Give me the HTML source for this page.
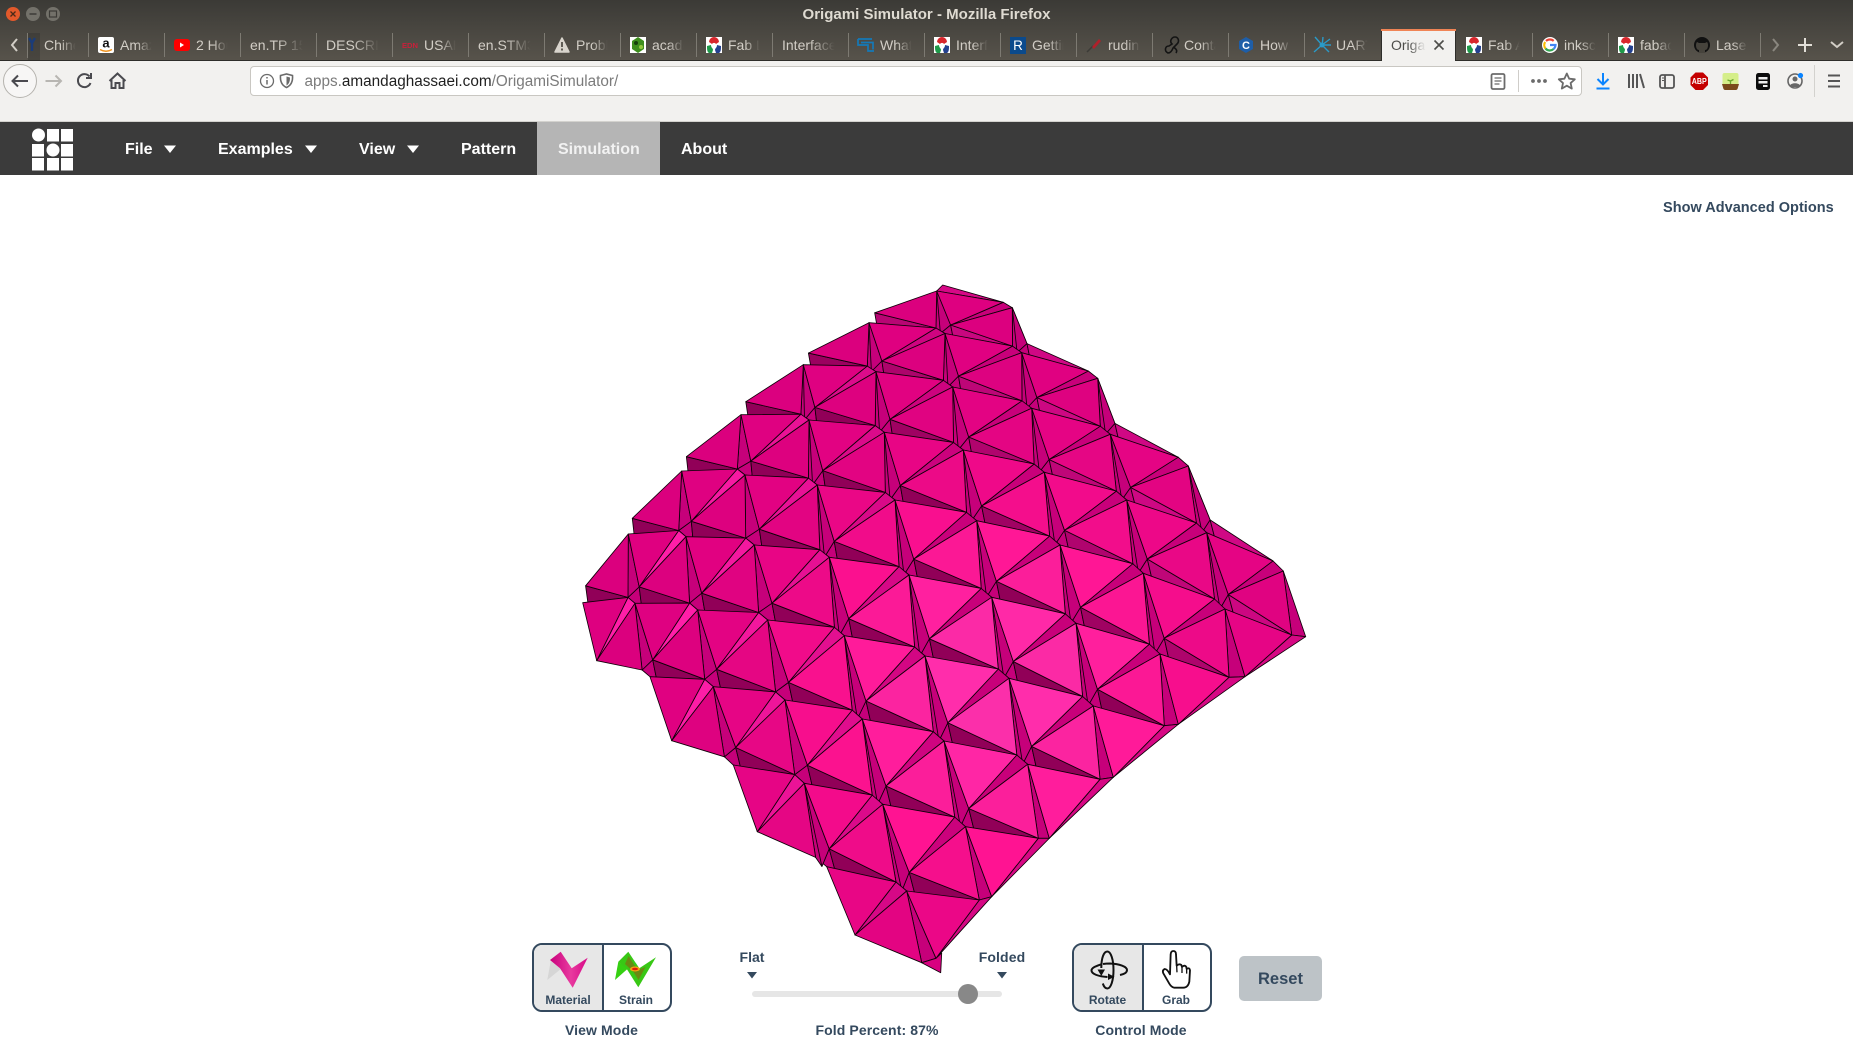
<!DOCTYPE html>
<html><head><meta charset="utf-8"><title>Origami Simulator - Mozilla Firefox</title>
<style>
html,body{margin:0;padding:0;width:1853px;height:1053px;overflow:hidden;background:#fff;font-family:"Liberation Sans",sans-serif}
.a{position:absolute}
svg.a{left:0;top:0}
#top{left:0;top:0;width:1853px;height:60px;background:linear-gradient(#3b3a36,#57534b)}
#line{left:0;top:60px;width:1853px;height:1px;background:#2e2d2a}
#tb{left:0;top:61px;width:1853px;height:60px;background:#f2f1ef}
#tbl{left:0;top:121px;width:1853px;height:1px;background:#d3d2ce}
#nav{left:0;top:122px;width:1853px;height:53px;background:#3b3b3b}
#sim{left:537px;top:122px;width:123px;height:53px;background:#b5b5b5;border-bottom:0}
#url{left:250px;top:66px;width:1330px;height:28px;background:#fff;border:1px solid #c9c7c2;border-radius:4px}
.t{position:absolute;top:33px;height:24px;overflow:hidden;white-space:nowrap;font-size:14px;line-height:24px;color:#d2cec6;-webkit-mask-image:linear-gradient(90deg,#000 50%,transparent 96%);mask-image:linear-gradient(90deg,#000 50%,transparent 96%)}
.n{position:absolute;top:140px;font-size:16px;line-height:20px;font-weight:bold;color:#fff;white-space:nowrap}
.l{position:absolute;font-weight:bold;color:#34495e;white-space:nowrap;transform:translateX(-50%)}
.g{position:absolute;top:943px;height:65px;width:136px;border:2px solid #34495e;border-radius:10px;overflow:hidden;background:#fff}
.g i{position:absolute;left:0;top:0;width:68px;height:65px;background:#e7e7e7;border-right:2px solid #34495e}
</style></head><body>
<div class="a" id="top"></div><div class="a" id="line"></div><div class="a" id="tb"></div><div class="a" id="tbl"></div><div class="a" id="nav"></div><div class="a" id="sim"></div><div class="a" id="url"></div>

<div class="a" style="left:1381px;top:29px;width:75px;height:32px;background:#f2f1ef;border-left:1px solid #2e2d2a;border-right:1px solid #2e2d2a;box-sizing:border-box"></div>
<div class="a" style="left:1381px;top:29px;width:75px;height:2px;background:#f08455"></div>

<div class="t" style="left:44px;width:33px">Chinese</div>
<div class="t" style="left:120px;width:33px">Amazon</div>
<div class="t" style="left:196px;width:33px">2 Hours</div>
<div class="t" style="left:250px;width:55px">en.TP 1500</div>
<div class="t" style="left:326px;width:55px">DESCRIPTION</div>
<div class="t" style="left:424px;width:33px">USAF</div>
<div class="t" style="left:478px;width:55px">en.STM32</div>
<div class="t" style="left:576px;width:33px">Problem</div>
<div class="t" style="left:652px;width:33px">academy</div>
<div class="t" style="left:728px;width:33px">Fab Lab</div>
<div class="t" style="left:782px;width:55px">Interface</div>
<div class="t" style="left:880px;width:33px">What</div>
<div class="t" style="left:956px;width:33px">Interface</div>
<div class="t" style="left:1032px;width:33px">Getting</div>
<div class="t" style="left:1108px;width:33px">rudin</div>
<div class="t" style="left:1184px;width:33px">Contact</div>
<div class="t" style="left:1260px;width:33px">How</div>
<div class="t" style="left:1336px;width:33px">UART</div>
<div class="t" style="left:1391px;width:36px;color:#4d4d4a">Origami</div>
<div class="t" style="left:1488px;width:33px">Fab Academy</div>
<div class="t" style="left:1564px;width:33px">inkscape</div>
<div class="t" style="left:1640px;width:33px">fabacademy</div>
<div class="t" style="left:1716px;width:33px">Laser</div>

<div class="a" style="left:304.5px;top:70px;font-size:15.3px;line-height:24px;color:#7b7b7b;white-space:nowrap">apps.<span style="color:#1f1f1f">amandaghassaei.com</span>/OrigamiSimulator/</div>

<div class="n" style="left:125px">File</div>
<div class="n" style="left:218px">Examples</div>
<div class="n" style="left:359px">View</div>
<div class="n" style="left:461px">Pattern</div>
<div class="n" style="left:558px;color:#f2f2f2">Simulation</div>
<div class="n" style="left:681px">About</div>

<svg class="a" width="1853" height="1053" viewBox="0 0 1853 1053">
<defs>
<symbol id="fab" viewBox="0 0 16 16"><rect width="16" height="16" fill="#fff"/><path d="M3 5a5 5 0 0 1 10 0l-3 2a2.400 2.400 0 0 0-4 0z" fill="#d8262c"/><path d="M1 9l4 -1c0 3 2 3 2 5l-1 3H3C1 15 1 12 1 9z" fill="#1f9a4a"/><path d="M15 9l-4-1c0 3-2 3-2 5l1 3h3c2-1 2-4 2-7z" fill="#24418f"/></symbol>
</defs>
<!-- window buttons -->
<circle cx="13" cy="14" r="7" fill="#e2592b"/><path d="M10.500 11.500l5 5m0-5l-5 5" stroke="#4a2a18" stroke-width="1.300"/>
<circle cx="33" cy="14" r="7" fill="#73716a"/><path d="M29.500 14h7" stroke="#3c3b37" stroke-width="1.500"/>
<circle cx="53" cy="14" r="7" fill="#73716a"/><rect x="49.500" y="11" width="7" height="6" fill="none" stroke="#3c3b37" stroke-width="1.200"/>
<text x="926.500" y="19" text-anchor="middle" font-family="Liberation Sans" font-weight="bold" font-size="14.500" textLength="248" lengthAdjust="spacingAndGlyphs" fill="#dfdbd2">Origami Simulator - Mozilla Firefox</text>
<!-- tab strip -->
<path d="M17 39l-5 6 5 6" fill="none" stroke="#d2cec6" stroke-width="2"/>
<rect x="27" y="33" width="1" height="25" fill="#7d7a72"/>
<rect x="28" y="33" width="12" height="27" fill="#2e2d2a" opacity=".35"/>
<path d="M29 38l3 5v8m3-13l-3 5" fill="none" stroke="#1b3c78" stroke-width="2.400"/>
<g fill="#7d7a72">
<rect x="88" y="33" width="1" height="24"/><rect x="164" y="33" width="1" height="24"/><rect x="240" y="33" width="1" height="24"/><rect x="316" y="33" width="1" height="24"/><rect x="392" y="33" width="1" height="24"/><rect x="468" y="33" width="1" height="24"/><rect x="544" y="33" width="1" height="24"/><rect x="620" y="33" width="1" height="24"/><rect x="696" y="33" width="1" height="24"/><rect x="772" y="33" width="1" height="24"/><rect x="848" y="33" width="1" height="24"/><rect x="924" y="33" width="1" height="24"/><rect x="1000" y="33" width="1" height="24"/><rect x="1076" y="33" width="1" height="24"/><rect x="1152" y="33" width="1" height="24"/><rect x="1228" y="33" width="1" height="24"/><rect x="1304" y="33" width="1" height="24"/><rect x="1532" y="33" width="1" height="24"/><rect x="1608" y="33" width="1" height="24"/><rect x="1684" y="33" width="1" height="24"/><rect x="1760" y="33" width="1" height="24"/>
</g>
<!-- amazon -->
<rect x="98" y="37" width="16" height="16" rx="2" fill="#fff"/><text x="106" y="47.500" text-anchor="middle" font-family="Liberation Sans" font-weight="bold" font-size="13" fill="#111">a</text><path d="M100 49.500q6 3.500 12 0" fill="none" stroke="#f0931e" stroke-width="1.500"/>
<!-- youtube -->
<rect x="174" y="39" width="16" height="12" rx="3" fill="#f00"/><path d="M180 42.500v5l4-2.500z" fill="#fff"/>
<!-- EDN -->
<text x="402" y="48" font-family="Liberation Sans" font-weight="bold" font-size="7.500" textLength="16" lengthAdjust="spacingAndGlyphs" fill="#c8203a">EDN</text>
<!-- warning -->
<path d="M562 38l7 14h-14z" fill="#d9d5cd" stroke="#d9d5cd" stroke-width="1.500" stroke-linejoin="round"/><path d="M562 42v5m0 1.500v2" stroke="#4b4841" stroke-width="1.700"/>
<!-- acad -->
<rect x="630" y="37" width="16" height="16" fill="#fff"/><path d="M638 37l6 4v8l-6 4-6-4v-8z" fill="#3e8e1e"/><circle cx="636" cy="43" r="2" fill="#163f0c"/><circle cx="641" cy="47" r="2" fill="#92c83e"/>
<use href="#fab" x="706" y="37" width="16" height="16"/>
<!-- what -->
<path d="M858 39h14M858 39v6h10v6h6M861 42.500h12v7" fill="none" stroke="#1479b8" stroke-width="1.700"/>
<use href="#fab" x="934" y="37" width="16" height="16"/>
<!-- R -->
<rect x="1010" y="37" width="16" height="17" fill="#0b4a8c"/><text x="1018" y="50" text-anchor="middle" font-family="Liberation Sans" font-size="13.500" fill="#fff">R</text>
<!-- rudin -->
<path d="M1087 52l6-6" stroke="#3c3b37" stroke-width="1.500"/><path d="M1092 47l7-8 2 2-7 8z" fill="#b0202a"/>
<!-- cont -->
<path d="M1168 53c-4-2-3-7 1-7l3-2c-3-3 0-7 3-7s5 4 2 7l-4 4c-1 3-3 5-5 5z M1173 47c2 1 5 3 3 6" fill="none" stroke="#141414" stroke-width="1.600"/>
<!-- how -->
<path d="M1246 37l7 4v8l-7 4-7-4v-8z" fill="#1e5ea8"/><text x="1246" y="49" text-anchor="middle" font-family="Liberation Sans" font-weight="bold" font-size="11" fill="#fff">C</text>
<!-- uart -->
<g stroke="#2a9ac8" stroke-width="1.400"><path d="M1322 45l-7-8m7 8l8-6m-8 8l1-10m-1 8l-8 7m8-7l7 7m-7-7l9 0"/></g><circle cx="1322" cy="45" r="2.500" fill="#2a9ac8"/>
<!-- active close -->
<path d="M1434.500 40.500l9 9m0-9l-9 9" stroke="#4d4d4a" stroke-width="1.600"/>
<use href="#fab" x="1466" y="37" width="16" height="16"/>
<!-- google -->
<circle cx="1550" cy="45" r="8" fill="#fff"/>
<path d="M1550 39.500a5.500 5.500 0 0 1 3.700 1.400" fill="none" stroke="#ea4335" stroke-width="2.200"/><path d="M1546 41a5.500 5.500 0 0 1 4-1.500" fill="none" stroke="#ea4335" stroke-width="2.200"/><path d="M1545.500 48.500a5.500 5.500 0 0 1-.3-6.500" fill="none" stroke="#fbbc05" stroke-width="2.200"/><path d="M1553.500 49a5.500 5.500 0 0 1-8-.5" fill="none" stroke="#34a853" stroke-width="2.200"/><path d="M1550 45h5.500a5.500 5.500 0 0 1-2 4" fill="none" stroke="#4285f4" stroke-width="2.200"/>
<use href="#fab" x="1618" y="37" width="16" height="16"/>
<!-- github -->
<circle cx="1702" cy="45" r="8" fill="#111"/><path d="M1699 53v-3c-2 0-3-2-3-5 0-2 1-3 1-3l2 1h6l2-1s1 1 1 3c0 3-1 5-3 5v3z" fill="#46433c"/>
<path d="M1773 39l5 6-5 6" fill="none" stroke="#8a877f" stroke-width="2"/>
<path d="M1805 38v14M1798 45h14" stroke="#e2dfd8" stroke-width="2"/>
<path d="M1831 42l6 5 6-5" fill="none" stroke="#d2cec6" stroke-width="2"/>
<!-- toolbar -->
<circle cx="20" cy="81" r="16.500" fill="#f7f6f5" stroke="#b5b3ae"/>
<path d="M28 81H12.500M18 75.500L12.500 81l5.500 5.500" fill="none" stroke="#4a4a4f" stroke-width="2"/>
<path d="M61 81H45.500M55.500 75.500L61 81l-5.500 5.500" fill="none" stroke="#b8b6b2" stroke-width="2"/>
<path d="M90.500 83a6.500 6.500 0 1 1-1-6.500M91 73v5h-5" fill="none" stroke="#4a4a4f" stroke-width="2"/>
<path d="M109.500 81l8-7.500 8 7.500M111.500 80v8h4v-5h4v5h4v-8" fill="none" stroke="#4a4a4f" stroke-width="2"/>
<circle cx="267" cy="81" r="6.500" fill="none" stroke="#6b6b6b" stroke-width="1.300"/><path d="M267 80v4.500M267 77v1.500" stroke="#6b6b6b" stroke-width="1.500"/>
<path d="M280.500 75.500l6-1.500 6 1.500c.5 6-1.500 10-6 12-4.500-2-6.500-6-6-12z" fill="none" stroke="#6b6b6b" stroke-width="1.600"/><path d="M286.500 76.500l3.500 1c0 4-1 6.500-3.500 8z" fill="#6b6b6b"/>
<rect x="1491.500" y="74" width="13" height="15" rx="1.500" fill="none" stroke="#6b6b6b" stroke-width="1.800"/><path d="M1494.500 78h7m-7 3h7m-7 3h5" stroke="#6b6b6b" stroke-width="1.200"/>
<rect x="1518" y="70" width="1" height="22" fill="#cfcdc9"/>
<g fill="#6b6b6b"><circle cx="1533" cy="81" r="1.900"/><circle cx="1539" cy="81" r="1.900"/><circle cx="1545" cy="81" r="1.900"/></g>
<path d="M1566.800 73.500l2.400 5.200 5.600.6-4.200 3.800 1.200 5.500-5-2.900-5 2.900 1.200-5.500-4.200-3.800 5.600-.6z" fill="none" stroke="#6b6b6b" stroke-width="1.800" stroke-linejoin="round"/>
<path d="M1603 73v11M1597.500 79l5.500 5.500 5.500-5.500M1596.500 88.500h13" fill="none" stroke="#0a84ff" stroke-width="2"/>
<path d="M1629 74v14M1633 74v14M1637 74v14M1640 74l4 14" fill="none" stroke="#555" stroke-width="2"/>
<rect x="1660" y="75" width="14" height="13" rx="2" fill="none" stroke="#555" stroke-width="1.800"/><path d="M1665 75v13" stroke="#555" stroke-width="1.800"/><path d="M1662 78h2m-2 2.500h2" stroke="#555"/>
<path d="M1695.500 72.500h7.500l5 5v7.500l-5 5h-7.500l-5-5v-7.500z" fill="#c40000"/><text x="1699.300" y="84" text-anchor="middle" font-family="Liberation Sans" font-weight="bold" font-size="8" textLength="15" lengthAdjust="spacingAndGlyphs" fill="#fff">ABP</text>
<path d="M1722.500 75a2 2 0 0 1 2-2h12a2 2 0 0 1 2 2v9h-16z" fill="#d5ee8a"/><path d="M1722 84h17l-1.500 5a2 2 0 0 1-2 1h-10a2 2 0 0 1-2-1z" fill="#7a4a1c"/><path d="M1730.500 84v-3m0 0l-3-1m3 1l3-1.500" stroke="#6aa52c" stroke-width="1.300" fill="none"/>
<rect x="1756" y="73" width="14" height="17" rx="2.500" fill="#0c0c0c"/><rect x="1758.500" y="77" width="9" height="2.500" fill="#eee"/><rect x="1758.500" y="81" width="9" height="2.500" fill="#eee"/><rect x="1763" y="85" width="4.500" height="2" fill="#eee"/>
<circle cx="1795" cy="81" r="7" fill="none" stroke="#666" stroke-width="1.600"/><circle cx="1795" cy="79" r="2.500" fill="#666"/><path d="M1790 85.500c1-3 9-3 10 0v1.500h-10z" fill="#666"/><circle cx="1800.500" cy="75.500" r="2.600" fill="#0a84ff"/>
<rect x="1814" y="65" width="1" height="32" fill="#d3d2ce"/>
<path d="M1828 75.500h12M1828 81h12M1828 86.500h12" stroke="#555" stroke-width="2"/>
<!-- logo -->
<g fill="#fff">
<circle cx="38.500" cy="135" r="6.500"/><rect x="47" y="129" width="12" height="12.500"/><rect x="61" y="129" width="12" height="12.500"/>
<rect x="32" y="144" width="12" height="12.500"/><circle cx="53" cy="150" r="6.500"/><rect x="61" y="144" width="12" height="12.500"/>
<rect x="32" y="158" width="12" height="12.500"/><rect x="47" y="158" width="12" height="12.500"/><rect x="61" y="158" width="12" height="12.500"/>
<path d="M164 145.500h12l-6 7.500zM305 145.500h12l-6 7.500zM407 145.500h12l-6 7.500z"/>
</g>
<!-- origami goes here -->
<g id="o" stroke="#0e0008" stroke-width=".85" stroke-linejoin="round"></g>
</svg>

<div class="a" style="left:1663px;top:198px;font-size:14.500px;line-height:20px;font-weight:bold;color:#34495e;white-space:nowrap;letter-spacing:.02px">Show Advanced Options</div>

<div class="g" style="left:532px"><i></i></div>
<div class="g" style="left:1072px"><i></i></div>
<div class="l" style="left:568px;top:993px;font-size:12px;line-height:15px">Material</div>
<div class="l" style="left:636px;top:993px;font-size:12px;line-height:15px">Strain</div>
<div class="l" style="left:601.500px;top:1022px;font-size:14px;line-height:16px;letter-spacing:.1px">View Mode</div>
<div class="l" style="left:752px;top:949px;font-size:14px;line-height:16px">Flat</div>
<div class="l" style="left:1002px;top:949px;font-size:14px;line-height:16px;letter-spacing:.1px">Folded</div>
<div class="l" style="left:877px;top:1022px;font-size:14px;line-height:16px;letter-spacing:.1px">Fold Percent: 87%</div>
<div class="a" style="left:752px;top:991px;width:250px;height:6px;border-radius:3px;background:#e6e6e6"></div>
<div class="a" style="left:958px;top:984px;width:20px;height:20px;border-radius:50%;background:#888"></div>
<div class="l" style="left:1107.500px;top:993px;font-size:12px;line-height:15px">Rotate</div>
<div class="l" style="left:1176px;top:993px;font-size:12px;line-height:15px">Grab</div>
<div class="l" style="left:1141px;top:1022px;font-size:14px;line-height:16px;letter-spacing:.1px">Control Mode</div>
<div class="a" style="left:1239px;top:956px;width:83px;height:45px;border-radius:5px;background:#bdc3c7;color:#34495e;font-size:16.500px;font-weight:bold;line-height:47px;text-align:center">Reset</div>

<svg class="a" width="1853" height="1053" viewBox="0 0 1853 1053" style="pointer-events:none">
<defs><linearGradient id="mg" x1="0" x2="1" y1="0" y2="0"><stop offset="0" stop-color="#c8007c"/><stop offset=".55" stop-color="#e83a9f"/><stop offset="1" stop-color="#d80a88"/></linearGradient></defs>
<!-- carets -->
<path d="M747 972h10l-5 6.500zM997 972h10l-5 6.500z" fill="#34495e"/>
<!-- material -->
<path d="M550.700 961l-3.400 19 14.700-12z" fill="#d6d6d6"/>
<path d="M550 960l10.700-8.300 11 16.600 16-10.600-15 30-12.700-19.400z" fill="url(#mg)"/>
<!-- strain -->
<path d="M618.300 961.700l-3.300 18.300 13-11.500z" fill="#35d012"/>
<path d="M618.300 961.700l10-10 11 16.600 16.700-11-17.700 30-12-19z" fill="#38c815"/>
<path d="M625 964l3.500-8 9 14 8-3-7 13-5-8z" fill="#6a8a12"/>
<ellipse cx="635" cy="969" rx="5" ry="2.500" fill="#f2a010"/><ellipse cx="635" cy="969" rx="3" ry="1.300" fill="#e31a0a"/>
<!-- rotate -->
<g fill="none" stroke="#111" stroke-width="2">
<path d="M1102 964c-5.500 2-10.500 3.500-10.500 6.500 0 3.500 7 6 16 6.500M1103 964c3-.5 5-.5 7-.5 9 .3 17 3 17 6.500 0 2-2 4-7 5"/>
<path d="M1101.300 968c0-10 2.500-16.500 6-16.500s6.200 8 6.200 18.500-2.700 18.500-6.200 18.500c-2 0-3.500-2-4.500-5"/>
</g>
<path d="M1097.500 969.500h7.500l-3.700 6.500zM1108 973.500l6.500 3.300-6.500 3.200z" fill="#111"/>
<!-- grab -->
<g transform="translate(1070 945) scale(.3333)">
<path d="M302 28Q303 18 310 18Q318 18 318 28L320 62Q328 55 334 60L336 66Q344 58 349 66L350 72Q358 66 360 76L358 110Q354 128 340 128L312 128Q304 126 298 116L280 85Q276 76 284 72Q292 72 300 88Z" fill="#fff" stroke="#111" stroke-width="5.500" stroke-linejoin="round"/>
<path d="M320 62L321 82M336 66L336 84M350 72L350 86" fill="none" stroke="#111" stroke-width="4"/>
</g>
</svg>

<script>
var rows={
0:[0,[936.7,291,1012.3,307.7]],
1:[0,[869,322.7,945,333.5,1021.7,352.7,1097.7,378.3]],
2:[0,[803.3,364.7,876,371.7,952.7,387,1031.7,408.3,1110.3,434.3,1188.3,466]],
3:[0,[741,414.7,809,420,884.3,432.3,963.3,450,1044.3,472.3,1126.7,500,1206.7,532.7,1283.3,571]],
4:[0,[681.7,471,745,475,817.3,485,895,500,976.7,520.7,1060,545,1143.3,573.3,1225,609]],
5:[0,[628.3,534,686,536.7,754.3,545,829.3,557.3,909,575,991.7,597.3,1076,623.3,1160,654]],
6:[0,[582.7,602.7,635,603.3,697.7,610,767.7,620,844.3,635.7,925,656,1009,678.3,1093.3,706]],
7:[2,[650,676.7,713.3,686.7,785,700,862.3,719,944,741,1027.7,764.3]],
8:[4,[733.3,765,804.3,783.3,882.7,804.3,965.5,826.7]],
9:[6,[826.7,866.7,906.7,891]],
10:[8,[930,970,1005,990]],
11:[9,[950,1040,1025,1060]]
};
var Qo={'4,8':[1291.7,635],'5,8':[1229,677.3],'6,8':[1164.3,725.7],'7,8':[1100,779.3],'8,8':[1038.3,838.3],'9,8':[979.3,900],'10,8':[921.7,962.7]};
var So={'3,7':[1305.7,636.7],'4,7':[1245,676.7],'5,7':[1178.3,724.3],'6,7':[1113.3,777.3],'7,7':[1049.3,838.3],'8,7':[991.7,896.7],'9,7':[936,958.3],'6,0':[596.7,660.7],'7,2':[671.7,740.7],'8,4':[757.3,831.7],'9,6':[855,935]};
function T(r,k){var R=rows[Math.min(r,11)],s=R[0],d=R[1],n=d.length/2,i=k-s;
 if(i>=0&&i<n)return[d[2*i],d[2*i+1]];
 if(i<0)return[d[0]+i*(d[2]-d[0]),d[1]+i*(d[3]-d[1])];
 var e=i-n+1;return[d[2*n-2]+e*(d[2*n-2]-d[2*n-4]),d[2*n-1]+e*(d[2*n-1]-d[2*n-3])];}
function has(r,k){if(r>9||r<0)return false;var R=rows[r];var i=k-R[0];return i>=0&&i<R[1].length/2;}
function Q(r,k){var o=Qo[r+','+k];if(o)return o;var t=T(r,k),p=T(r,k-1),d=T(r+1,k+1);
 return[t[0]-.11*(t[0]-p[0])-.08*(d[0]-t[0]),t[1]-.11*(t[1]-p[1])-.08*(d[1]-t[1])];}
function S(r,k){var o=So[r+','+k];if(o)return o;var t=T(r,k),n=T(r,k+1),d=T(r+1,k+1);
 return[t[0]+.76*(d[0]-t[0])+.1*(n[0]-t[0]),t[1]+.76*(d[1]-t[1])+.1*(n[1]-t[1])];}
function X(r,k){var t=T(r,k),n=T(r,k+1);return[t[0]+.1*(n[0]-t[0]),t[1]+.1*(n[1]-t[1])];}
function cl(v){return v<0?0:v>1?1:v;}
function rgb(a,b,c){return'rgb('+Math.round(a)+','+Math.round(b)+','+Math.round(c)+')';}
function tri(x,y,f){var dx=x-1000,dy=y-690,t=Math.exp(-(dx*dx+dy*dy)/(170*170));
 return rgb(Math.min(255,(222+33*cl(2.6*t))*f),48*t,(128+46*t)*f);}
function cwC(x,y){return'rgb(198,0,122)';}
function ltC(x){var v=cl((x-700)/280);return rgb(255-55*v,30-30*v,168-46*v);}
function dkC(x,y){var v=cl((x-y-420)/230);return rgb(145+63*v,8*v,88+44*v);}
function ce(a,b,c){return[(a[0]+b[0]+c[0])/3,(a[1]+b[1]+c[1])/3];}
var out=[],back=[],mid=[];
function P(pts,fill,arr,nostroke){(arr||out).push('<polygon points="'+pts.map(function(p){return p[0].toFixed(1)+','+p[1].toFixed(1)}).join(' ')+'" fill="'+fill+'"'+(nostroke?' stroke="none"':'')+'/>');}
var half={'6,0':1,'7,2':1,'8,4':1,'9,6':1},noRight={'0,1':1,'1,3':1,'2,5':1,'3,7':1};
var r,k,R,s,e;
for(r=0;r<=9;r++){R=rows[r];s=R[0];e=s+R[1].length/2-1;
 for(k=s;k<=e;k++){
  if(has(r,k+1)&&has(r+1,k+1)&&has(r+1,k+2))P([T(r,k),T(r,k+1),T(r+1,k+2),T(r+1,k+1)],cwC(),back,true);
 }}
/* top corner wedge */
P([[942.7,285],Q(0,1),T(0,0)],'rgb(214,8,134)',mid);
/* virtual left wedges */
for(r=0;r<=5;r++){var sv=S(r,-1),q=Q(r+1,1),x=X(r+1,0);
 P([sv,q,x],dkC(sv[0],sv[1]),mid);}
for(r=0;r<=9;r++){R=rows[r];s=R[0];e=s+R[1].length/2-1;
 for(k=s;k<=e;k++){
  var key=r+','+k,h=half[key],t=T(r,k),sk=S(r,k),qd=Q(r+1,k+1),td=T(r+1,k+1);
  /* filler quad + dark wedge beneath S */
  if(has(r+1,k+1)&&k<7){
    var xx=X(r+1,k+1),q2=Q(r+1,k+2);
    P([td,xx,sk,qd],cwC(),mid);
    P([sk,q2,xx],dkC(sk[0],sk[1]),mid);
  }
  /* center wedge */
  if(!h){
    var pp=qd;
    if(t[0]>800&&r!==9&&k<7){var nn=T(r+1,k+2);pp=[td[0]-.06*(nn[0]-td[0]),td[1]-.01*(nn[1]-td[1])];}
    P([t,qd,pp,sk],cwC(),mid);
    if(pp!==qd)P([t,pp,sk],cwC(),mid);
  }
  /* light wedge */
  if(k>s){var ls=S(r,k-1),qq=Q(r,k);P([ls,qq,t],ltC(t[0]),mid);}
 }}
for(r=4;r<=9;r++){var a=S(r-1,7),b=Q(r,8),c=S(r,7);P([a,b,c],'rgb(214,8,132)',mid);}
P([[921.7,962.7],[940.7,972.7],[941.7,953],[936,958.3]],'rgb(216,0,128)',mid);
for(r=0;r<=9;r++){R=rows[r];s=R[0];e=s+R[1].length/2-1;
 for(k=s;k<=e;k++){
  var key2=r+','+k,t2=T(r,k);
  if(!half[key2]){var L=S(r,k-1),B=Q(r+1,k+1),c1=ce(t2,L,B);P([t2,L,B],tri(c1[0],c1[1],.985));}
  if(!noRight[key2]){var Rr=Q(r,k+1),Br=S(r,k),c2=ce(t2,Rr,Br);P([t2,Rr,Br],tri(c2[0],c2[1],1));}
 }}
document.getElementById('o').innerHTML=back.join('')+mid.join('')+out.join('');
</script>
</body></html>
